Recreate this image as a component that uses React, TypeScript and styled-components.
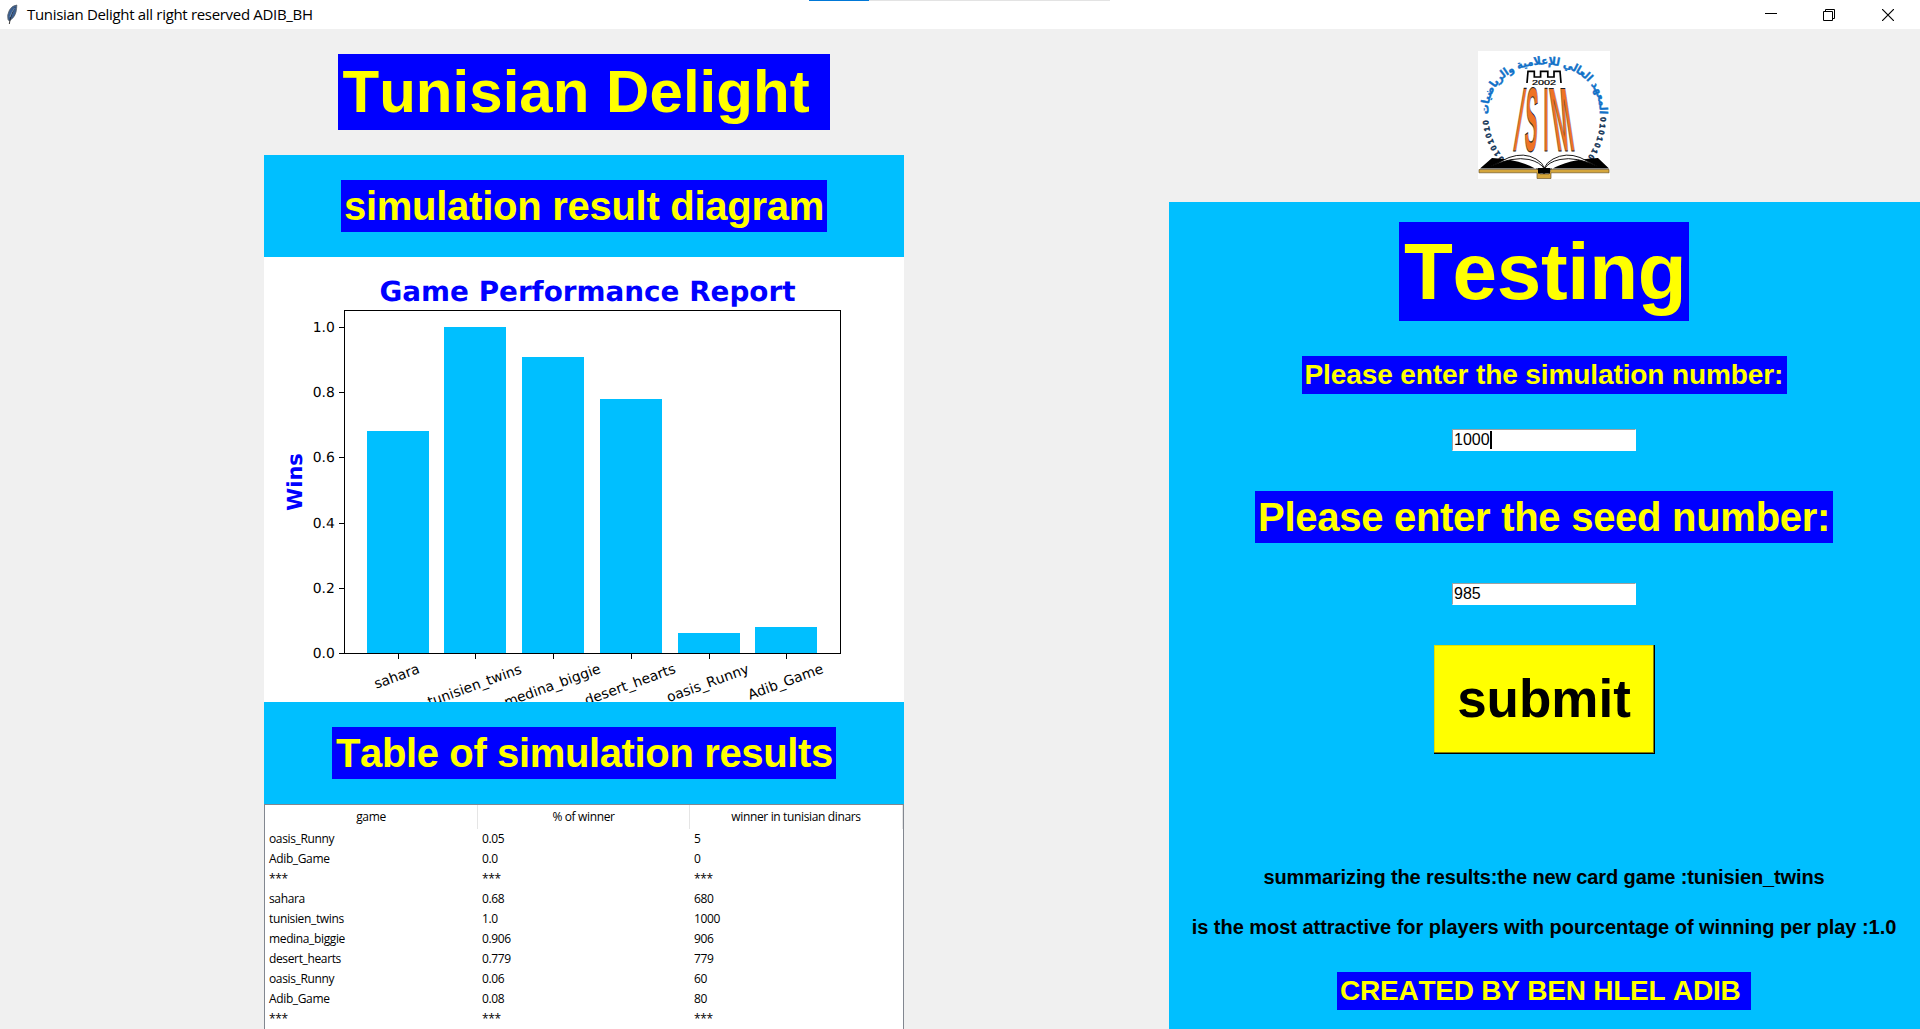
import React from "react";
import styled, { createGlobalStyle } from "styled-components";

const GlobalStyle = createGlobalStyle`
  * { box-sizing: border-box; }
  html, body { margin: 0; padding: 0; overflow: hidden; background: #f0f0f0; }
`;

const SKY = "#00bfff";
const BLUE = "#0000ff";
const YELLOW = "#ffff00";
const ARIAL = `"Liberation Sans", Arial, sans-serif`;
const SEGOE = `"Open Sans", "Noto Sans", sans-serif`;

const Window = styled.div`
  width: 1920px;
  height: 1029px;
  display: flex;
  flex-direction: column;
  background: #f0f0f0;
  overflow: hidden;
  font-family: ${ARIAL};
  font-kerning: none;
`;

const TitleBar = styled.header`
  height: 29px;
  flex: none;
  display: flex;
  align-items: center;
  background: #fff;
  position: relative;
`;

const LoadingStrip = styled.div`
  position: absolute;
  left: 809px;
  top: 0;
  width: 301px;
  height: 1px;
  background: linear-gradient(to right, #0078d7 60px, #e3e3e3 60px);
`;

const Feather = styled.svg`
  margin-left: 5px;
  flex: none;
`;

const TitleText = styled.div`
  flex: 1;
  margin-left: 6px;
  font: 15px/29px ${SEGOE};
  letter-spacing: -0.32px;
  color: #000;
`;

const Controls = styled.div`
  display: grid;
  grid-template-columns: 58px 59px 12px;
  align-items: center;
  margin-right: 26px;
`;

const Body = styled.main`
  flex: 1;
  display: flex;
  align-items: flex-start;
  justify-content: space-between;
  padding-left: 264px;
`;

const LeftColumn = styled.section`
  width: 640px;
  display: flex;
  flex-direction: column;
  align-items: center;
  padding-top: 25px;
`;

const RightColumn = styled.section`
  width: 751px;
  display: flex;
  flex-direction: column;
  align-items: center;
  padding-top: 22px;
`;

const Label = styled.div<{ $w: number; $h: number; $size: number; $spacing?: number; $pad?: number }>`
  width: ${(p) => p.$w}px;
  height: ${(p) => p.$h}px;
  flex: none;
  padding-left: ${(p) => p.$pad ?? 3}px;
  background: ${BLUE};
  color: ${YELLOW};
  font-size: ${(p) => p.$size}px;
  font-weight: bold;
  line-height: ${(p) => p.$h}px;
  letter-spacing: ${(p) => p.$spacing ?? 0}px;
  white-space: pre;
`;

const SectionBand = styled.div`
  width: 100%;
  height: 102px;
  display: flex;
  align-items: center;
  justify-content: center;
  background: ${SKY};
`;

const LeftPanel = styled.div`
  width: 100%;
  margin-top: 25px;
`;

const ChartBox = styled.svg`
  display: block;
  background: #fff;
  text-rendering: geometricPrecision;
`;

const Table = styled.div`
  height: 240px;
  background: #fff;
  border: 1px solid #828790;
  font: 12px/20px ${SEGOE};
  letter-spacing: -0.36px;
  color: #000;
`;

const HeaderRow = styled.div`
  display: grid;
  grid-template-columns: 213px 212px 213px;
  height: 24px;
`;

const HeaderCell = styled.div`
  border-right: 1px solid #e5e5e5;
  text-align: center;
  line-height: 24px;
`;

const Row = styled.div`
  display: grid;
  grid-template-columns: 213px 212px 213px;
  height: 20px;
`;

const Cell = styled.div`
  padding-left: 4px;
`;

const Panel = styled.div`
  width: 100%;
  height: 827px;
  margin-top: 23px;
  padding: 20px 1px 0 0;
  display: flex;
  flex-direction: column;
  align-items: center;
  background: ${SKY};
`;

const Entry = styled.div`
  width: 184px;
  height: 22px;
  flex: none;
  display: flex;
  align-items: center;
  padding-left: 1px;
  background: #fff;
  border: 1px solid;
  border-color: #a0a0a0 #fff #fff #a0a0a0;
  font-size: 16px;
  line-height: 20px;
  color: #000;
`;

const Caret = styled.span`
  width: 2px;
  height: 18px;
  background: #000;
`;

const Submit = styled.button`
  width: 221px;
  height: 109px;
  flex: none;
  margin: 0;
  padding: 0 0 3px;
  border: 0;
  border-radius: 0;
  background: ${YELLOW};
  box-shadow: inset -1px -1px 0 #000, inset -2px -2px 0 #808000, inset 1px 1px 0 #e0e000;
  color: #000;
  font: bold 53px ${ARIAL};
  font-kerning: none;
`;

const Gap = styled.div<{ $h: number }>`
  height: ${(p) => p.$h}px;
  flex: none;
`;

const Summary = styled.p<{ $spacing: number }>`
  margin: 0;
  height: 24px;
  flex: none;
  font-size: 20px;
  font-weight: bold;
  line-height: 24px;
  letter-spacing: ${(p) => p.$spacing}px;
  color: #000;
  white-space: nowrap;
`;

const bars: [string, number, number][] = [
  ["sahara", 0.68, 45],
  ["tunisien_twins", 1.0, 98],
  ["medina_biggie", 0.906, 98],
  ["desert_hearts", 0.779, 92],
  ["oasis_Runny", 0.06, 84],
  ["Adib_Game", 0.08, 76],
];

const ticks = [0, 0.2, 0.4, 0.6, 0.8, 1.0];

const AX = { left: 80.5, top: 53.5, zero: 396.05 };

function Chart() {
  const unitX = 496 / 6.38;
  const unitY = 342.65 / 1.05;
  return (
    <ChartBox width="640" height="445" viewBox="0 0 640 445" fontFamily='"DejaVu Sans", sans-serif'>
      <text x="323.5" y="44" textAnchor="middle" fontSize="27.78" fontWeight="bold" fill={BLUE} textLength="416" lengthAdjust="spacingAndGlyphs">
        Game Performance Report
      </text>
      <text transform="translate(37.5 225) rotate(-90)" textAnchor="middle" fontSize="20.83" fontWeight="bold" fill={BLUE}>
        Wins
      </text>
      {bars.map(([name, v], i) => {
        const c = 80 + (0.69 + i) * unitX;
        const x = Math.round(c - 0.4 * unitX);
        const y = Math.round(AX.zero - v * unitY);
        return <rect key={name} x={x} y={y} width="62" height={396.5 - y} fill={SKY} />;
      })}
      <rect x={AX.left} y={AX.top} width="496" height="343" fill="none" stroke="#000" />
      {ticks.map((t) => {
        const y = Math.round(AX.zero - t * unitY) + 0.5;
        return (
          <g key={t}>
            <line x1="75" x2="80" y1={y} y2={y} stroke="#000" />
            <text x="70.8" y={y + 4.8} textAnchor="end" fontSize="13.89">
              {t.toFixed(1)}
            </text>
          </g>
        );
      })}
      {bars.map(([name, , w], i) => {
        const c = 80 + (0.69 + i) * unitX;
        const tx = Math.round(c) + 0.5;
        const cy = 405.8 + (w * 0.342 + 13.9 * 0.94) / 2;
        return (
          <g key={name}>
            <line x1={tx} x2={tx} y1="397" y2="402" stroke="#000" />
            <text transform={`translate(${c - 0.6} ${cy}) rotate(-20)`} y="4" textAnchor="middle" fontSize="13.89">
              {name}
            </text>
          </g>
        );
      })}
    </ChartBox>
  );
}

const LogoBox = styled.svg`
  display: block;
  background: #fff;
  flex: none;
  margin-right: 1px;
`;

const letters: [string, string][] = [
  ["I", "matrix(0.2 0 -0.17 1 34 99.5)"],
  ["S", "matrix(0.21 0 -0.04 1 46 99.5)"],
  ["I", "matrix(0.2 0 0 1 65.5 99.5)"],
  ["M", "matrix(0.25 0 0.15 1 79 99.5)"],
];

function Logo() {
  return (
    <LogoBox width="132" height="128" viewBox="0 0 132 128">
      <defs>
        <path id="arcTop" d="M10.500 64 C8 34 34 13.500 65.500 13.500 C98 13.500 124 34 121.500 64" />
        <path id="arcLeft" d="M26.500 108 Q12 92 10 66" />
        <path id="arcRight" d="M122.500 66 Q121.500 91 108.500 108" />
      </defs>
      <text fontFamily='"DejaVu Sans Condensed", "DejaVu Sans", sans-serif' fontStretch="condensed" fontWeight="bold" fontSize="11" fill="#1171c8" stroke="#1171c8" strokeWidth="0.4" textAnchor="middle">
        <textPath href="#arcTop" startOffset="50%">المعهد العالي للإعلامية والرياضيات</textPath>
      </text>
      <g fontFamily={ARIAL} fontWeight="bold" fontSize="8" fill="#0a3f80" stroke="#0a2030" strokeWidth="0.4">
        <text>
          <textPath href="#arcLeft" textLength="43">0101010</textPath>
        </text>
        <text>
          <textPath href="#arcRight" textLength="43">0101010</textPath>
        </text>
      </g>
      <path d="M49 32 L50 20.3 H56.3 V26 H62.6 V20.3 H69.8 V26 H76 V20.3 H82 L83 32" fill="none" stroke="#000" strokeWidth="1.7" />
      <text x="54" y="34.3" fontFamily={ARIAL} fontSize="7" textLength="24" lengthAdjust="spacingAndGlyphs" stroke="#000" strokeWidth="0.2">
        2002
      </text>
      {letters.map(([ch, m], i) => (
        <text key={i} transform={m} fontFamily={ARIAL} fontWeight="bold" fontSize="91" fill="#ee7324" stroke="#222" strokeWidth="0.8" vectorEffect="non-scaling-stroke">
          {ch}
        </text>
      ))}
      <path d="M2 117.5 L14 107 Q42 108 60 119 L66 123 L72 119 Q90 108 120 107 L131 117.5 Z" fill="#000" />
      <path d="M11 116 L31 106.5 Q46 101 58 108 Q65 112 66.3 117 Q68 112 75 108 Q88 101 102 106.5 L121 116 Q98 105 82 108.500 Q70 111 66.500 118 Q62 111 51 108.500 Q35 105 11 116 Z" fill="#fff" stroke="#000" strokeWidth="0.9" />
      <path d="M1 118.500 H60 L62 123 H71 L73 118.500 H131 V121.800 H73 V127.500 H59 V121.800 H1 Z" fill="#d5a63c" stroke="#5d451a" strokeWidth="0.6" />
      <path d="M60 117 H72 V122.500 H60 Z" fill="#000" />
    </LogoBox>
  );
}

const rows = [
  ["oasis_Runny", "0.05", "5"],
  ["Adib_Game", "0.0", "0"],
  ["***", "***", "***"],
  ["sahara", "0.68", "680"],
  ["tunisien_twins", "1.0", "1000"],
  ["medina_biggie", "0.906", "906"],
  ["desert_hearts", "0.779", "779"],
  ["oasis_Runny", "0.06", "60"],
  ["Adib_Game", "0.08", "80"],
  ["***", "***", "***"],
];

export default function App() {
  return (
    <Window>
      <GlobalStyle />
      <TitleBar>
        <LoadingStrip />
        <Feather width="16" height="22" viewBox="0 0 16 22">
          <path d="M11.800 1 Q7 1.500 4.500 6 Q1.800 11 3 15.500 L4.300 17 L5.800 15.800 Q10 13 11 8 Q11.800 4 11.800 1 Z" fill="#3a5f91" stroke="#555d66" strokeWidth="0.8" />
          <path d="M10 3.500 Q6 9 4.300 20" fill="none" stroke="#222" strokeWidth="0.9" />
          <path d="M9.600 4 Q6.500 8 5 13" fill="none" stroke="#86a8cf" strokeWidth="0.7" />
        </Feather>
        <TitleText>Tunisian Delight all right reserved ADIB_BH</TitleText>
        <Controls>
          <svg width="12" height="12" viewBox="0 0 12 12" stroke="#000">
            <path d="M0 4.500 H12" />
          </svg>
          <svg width="12" height="12" viewBox="0 0 12 12" stroke="#000" fill="none">
            <path d="M0.500 2.500 H9.500 V11.500 H0.500 Z M2.500 2.500 V0.500 H11.500 V9.500 H9.500" />
          </svg>
          <svg width="12" height="12" viewBox="0 0 12 12" stroke="#000">
            <path d="M0 0 L12 12 M12 0 L0 12" strokeWidth="1.200" />
          </svg>
        </Controls>
      </TitleBar>
      <Body>
        <LeftColumn>
          <Label $w={492} $h={76} $size={60} $spacing={0.03} $pad={4.5}>{"Tunisian Delight "}</Label>
          <LeftPanel>
            <SectionBand>
              <Label $w={486} $h={52} $size={40} $spacing={-0.27}>simulation result diagram</Label>
            </SectionBand>
            <Chart />
            <SectionBand>
              <Label $w={504} $h={52} $size={40} $spacing={-0.37} $pad={4}>Table of simulation results</Label>
            </SectionBand>
            <Table>
              <HeaderRow>
                <HeaderCell>game</HeaderCell>
                <HeaderCell>% of winner</HeaderCell>
                <HeaderCell>winner in tunisian dinars</HeaderCell>
              </HeaderRow>
              {rows.map((r, i) => (
                <Row key={i}>
                  {r.map((c, j) => (
                    <Cell key={j}>{c}</Cell>
                  ))}
                </Row>
              ))}
            </Table>
          </LeftPanel>
        </LeftColumn>
        <RightColumn>
          <Logo />
          <Panel>
            <Label $w={290} $h={99} $size={80} $spacing={-0.3} $pad={5}>Testing</Label>
            <Gap $h={35} />
            <Label $w={485} $h={38} $size={28} $spacing={-0.1}>Please enter the simulation number:</Label>
            <Gap $h={35} />
            <Entry>1000<Caret /></Entry>
            <Gap $h={40} />
            <Label $w={578} $h={52} $size={40} $spacing={-0.28}>Please enter the seed number:</Label>
            <Gap $h={40} />
            <Entry>985</Entry>
            <Gap $h={40} />
            <Submit>submit</Submit>
            <Gap $h={111} />
            <Summary $spacing={-0.12}>summarizing the results:the new card game :tunisien_twins</Summary>
            <Gap $h={26} />
            <Summary $spacing={-0.03}>is the most attractive for players with pourcentage of winning per play :1.0</Summary>
            <Gap $h={33} />
            <Label $w={414} $h={38} $size={28} $spacing={-0.23}>{"CREATED BY BEN HLEL ADIB "}</Label>
          </Panel>
        </RightColumn>
      </Body>
    </Window>
  );
}
